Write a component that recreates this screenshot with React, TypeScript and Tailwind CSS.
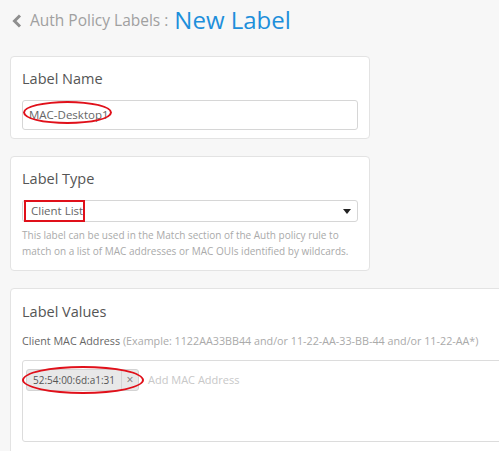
import React from "react";

export default function App() {
  return (
    <div className="w-[499px] h-[451px] overflow-hidden bg-[#f7f7f7] font-['Open_Sans',sans-serif] text-[#555]">
      <div className="flex items-center h-[38px] pl-[12px] pt-[1px]">
        <svg width="10" height="14" viewBox="0 0 10 14" className="mr-[8px] mt-[3px]">
          <path d="M8 1.5 L2.5 7 L8 12.5" stroke="#8f8f8f" strokeWidth="3" fill="none" />
        </svg>
        <span className="text-[15.5px] text-[#a0a0a0] leading-none mt-[3px]">Auth Policy Labels :</span>
        <span className="text-[24px] text-[#1d8fdb] leading-none ml-[6px]">New Label</span>
      </div>

      <div className="ml-[10px] mt-[18px] w-[360px] h-[83px] bg-white border border-[#e3e3e3] rounded-[4px] px-[11px] pt-[11px]">
        <div className="text-[14.5px] leading-[22px] text-[#555]">Label Name</div>
        <div className="relative mt-[10px] h-[30px] border border-[#d6d6d6] rounded-[3px] flex items-center pl-[6px] text-[11.5px] text-[#666]">
          MAC-Desktop1
          <span className="absolute left-[0px] top-[0px] w-[89px] h-[23px] border-2 border-[#e0101a] rounded-[50%]" />
        </div>
      </div>

      <div className="ml-[10px] mt-[17px] w-[360px] h-[115px] bg-white border border-[#e3e3e3] rounded-[4px] px-[11px] pt-[11px]">
        <div className="text-[14.5px] leading-[22px] text-[#555]">Label Type</div>
        <div className="relative mt-[10px] h-[22px] border border-[#d6d6d6] rounded-[3px] flex items-center justify-between pl-[8px] pr-[6px] text-[11.5px] text-[#666]">
          <span>Client List</span>
          <svg width="8" height="5" viewBox="0 0 8 5"><path d="M0 0 L8 0 L4 5 Z" fill="#222" /></svg>
          <span className="absolute left-[1px] top-[-1px] w-[61px] h-[22px] border-2 border-[#e0101a]" />
        </div>
        <div className="mt-[5px] text-[10px] leading-[16px] text-[#aaa]">
          This label can be used in the Match section of the Auth policy rule to match on a list of MAC addresses or MAC OUIs identified by wildcards.
        </div>
      </div>

      <div className="ml-[10px] mt-[17px] w-[560px] h-[200px] bg-white border border-[#e3e3e3] rounded-[4px] px-[11px] pt-[12px]">
        <div className="text-[14.5px] leading-[22px] text-[#555]">Label Values</div>
        <div className="mt-[10px] text-[10.75px] leading-[16px] whitespace-nowrap">
          <span className="text-[#666]">Client MAC Address</span>
          <span className="text-[#aaa]"> (Example: 1122AA33BB44 and/or 11-22-AA-33-BB-44 and/or 11-22-AA*)</span>
        </div>
        <div className="mt-[11px] h-[82px] border border-[#dcdcdc] rounded-[3px] pl-[3px] pt-[8px]">
          <div className="flex items-center">
            <div className="relative flex items-stretch h-[22px] bg-[#e8e8e8] border border-[#d3d3d3] rounded-[3px] text-[10px] text-[#555]">
              <span className="flex items-center px-[6px]">52:54:00:6d:a1:31</span>
              <span className="flex items-center justify-center w-[17px] border-l border-[#d3d3d3] text-[#777] text-[12px]">×</span>
              <span className="absolute left-[-5px] top-[-4px] w-[122px] h-[28px] border-2 border-[#e0101a] rounded-[50%]" />
            </div>
            <span className="ml-[9px] text-[11px] text-[#c8c8c8]">Add MAC Address</span>
          </div>
        </div>
      </div>
    </div>
  );
}
